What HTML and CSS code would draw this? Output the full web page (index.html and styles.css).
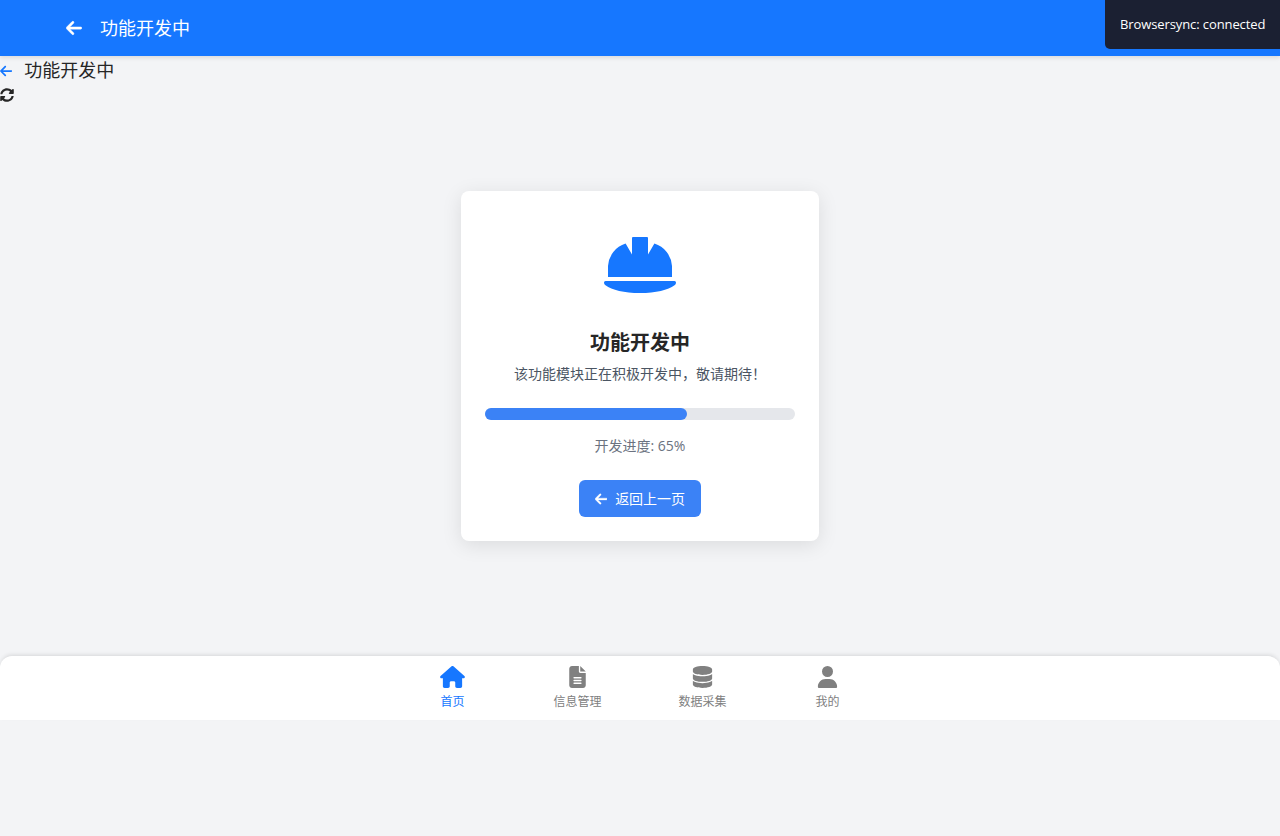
FILE: index.html
```html
<!DOCTYPE html>
<html lang="zh-CN">
<head>
<meta charset="utf-8">
<title>功能开发中</title>
<link rel="stylesheet" href="styles.css">
</head>
<body>
<svg class="sprite" xmlns="http://www.w3.org/2000/svg">
  <symbol id="arrow" viewBox="0 0 448 512"><path d="M9.4 233.4c-12.5 12.5-12.5 32.8 0 45.3l160 160c12.5 12.5 32.8 12.5 45.3 0s12.5-32.8 0-45.3L109.2 288 416 288c17.7 0 32-14.3 32-32s-14.3-32-32-32l-306.7 0L214.6 118.6c12.5-12.5 12.5-32.8 0-45.3s-32.8-12.5-45.3 0l-160 160z"/></symbol>
</svg>
<header class="header">
  <svg class="header-arrow bold-arrow"><use href="#arrow"/></svg>
  <h1 class="header-title">功能开发中</h1>
</header>
<div class="notify">Browsersync: connected</div>
<main class="main">
  <div class="subhead">
    <svg class="small-arrow"><use href="#arrow"/></svg>
    <span class="subhead-title">功能开发中</span>
  </div>
  <div class="refresh">
    <svg class="refresh-icon" viewBox="0 0 512 512"><path d="M370.72 133.28C339.458 104.008 298.888 87.962 255.848 88c-77.458.068-144.328 53.178-162.791 126.85-1.344 5.363-6.122 9.15-11.651 9.15H24.103c-7.498 0-13.194-6.807-11.807-14.176C33.933 94.924 134.813 8 256 8c66.448 0 126.791 26.136 171.315 68.685L463.03 40.97C478.149 25.851 504 36.559 504 57.941V192c0 13.255-10.745 24-24 24H345.941c-21.382 0-32.09-25.851-16.971-40.971l41.75-41.749zM32 296h134.059c21.382 0 32.09 25.851 16.971 40.971l-41.75 41.75c31.262 29.273 71.835 45.319 114.876 45.28 77.418-.07 144.315-53.144 162.787-126.849 1.344-5.363 6.122-9.15 11.651-9.15h57.304c7.498 0 13.194 6.807 11.807 14.176C478.067 417.076 377.187 504 256 504c-66.448 0-126.791-26.136-171.315-68.685L48.97 471.03C33.851 486.149 8 475.441 8 454.059V320c0-13.255 10.745-24 24-24z"/></svg>
  </div>
  <section class="stage">
    <div class="card">
      <svg class="helmet" viewBox="0 0 72 64"><path d="M29 4h14q1 0 1 1V21.500L50.400 10.600A25 25 0 0 1 68 33V44H4V33A25 25 0 0 1 21.600 10.600L28 21.500V5Q28 4 29 4z"/><path d="M1.500 48h69q1.500 0 1.500 1.500c0 1.200-.5 2-1.500 2.700C64 57 52 60 36 60S8 57 1.500 52.200C.5 51.500 0 50.700 0 49.500Q0 48 1.500 48z"/></svg>
      <h2 class="card-title">功能开发中</h2>
      <p class="card-text">该功能模块正在积极开发中，敬请期待！</p>
      <div class="track"><div class="fill" style="width:65%"></div></div>
      <p class="progress-text">开发进度: 65%</p>
      <button class="button"><svg class="button-arrow bold-arrow"><use href="#arrow"/></svg>返回上一页</button>
    </div>
  </section>
  <nav class="tabs">
    <a class="tab active"><svg class="tab-icon" viewBox="0 0 576 512"><path d="M575.8 255.5c0 18-15 32.1-32 32.1h-32l.7 160.2c0 2.700-.2 5.400-.5 8.100V472c0 22.100-17.900 40-40 40H456c-1.100 0-2.200 0-3.300-.1c-1.400 .1-2.800 .1-4.200 .1H416 392c-22.100 0-40-17.900-40-40V448 384c0-17.700-14.300-32-32-32H256c-17.700 0-32 14.300-32 32v64 24c0 22.100-17.900 40-40 40H160 128.100c-1.500 0-3-.1-4.500-.2c-1.200 .1-2.400 .2-3.600 .2H104c-22.100 0-40-17.900-40-40V360c0-.9 0-1.900 .1-2.800V287.600H32c-18 0-32-14-32-32.100c0-9 3-17 10-24L266.400 8c7-7 15-8 22-8s15 2 21 7L564.800 231.500c8 7 12 15 11 24z"/></svg>首页</a>
    <a class="tab"><svg class="tab-icon" viewBox="0 0 384 512"><path d="M64 0C28.700 0 0 28.700 0 64V448c0 35.300 28.700 64 64 64H320c35.300 0 64-28.700 64-64V160H256c-17.700 0-32-14.300-32-32V0H64zM256 0V128H384L256 0zM112 256H272c8.800 0 16 7.200 16 16s-7.200 16-16 16H112c-8.800 0-16-7.200-16-16s7.200-16 16-16zm0 64H272c8.800 0 16 7.200 16 16s-7.200 16-16 16H112c-8.800 0-16-7.200-16-16s7.200-16 16-16zm0 64H272c8.800 0 16 7.200 16 16s-7.200 16-16 16H112c-8.800 0-16-7.200-16-16s7.200-16 16-16z"/></svg>信息管理</a>
    <a class="tab"><svg class="tab-icon" viewBox="0 0 448 512"><path d="M448 80v48c0 44.200-100.300 80-224 80S0 172.200 0 128V80C0 35.800 100.300 0 224 0S448 35.800 448 80zM393.200 214.700c20.800-7.400 39.900-16.900 54.800-28.600V288c0 44.200-100.300 80-224 80S0 332.200 0 288V186.100c14.900 11.800 34 21.200 54.800 28.600C99.700 230.700 159.500 240 224 240s124.300-9.300 169.200-25.300zM0 346.100c14.900 11.800 34 21.200 54.800 28.600C99.700 390.700 159.500 400 224 400s124.300-9.300 169.200-25.300c20.800-7.400 39.900-16.900 54.800-28.600V432c0 44.200-100.300 80-224 80S0 476.200 0 432V346.100z"/></svg>数据采集</a>
    <a class="tab"><svg class="tab-icon" viewBox="0 0 448 512"><path d="M224 256A128 128 0 1 0 224 0a128 128 0 1 0 0 256zm-45.700 48C79.800 304 0 383.800 0 482.300C0 498.700 13.300 512 29.700 512H418.300c16.400 0 29.700-13.300 29.700-29.700C448 383.800 368.200 304 269.700 304H178.300z"/></svg>我的</a>
  </nav>
</main>
</body>
</html>
```
FILE: styles.css
```css
* { box-sizing: border-box; margin: 0; padding: 0; }
body {
  min-height: 836px;
  background: #f3f4f6;
  color: #262626;
  font: 14px/24px "Open Sans", "Noto Sans CJK SC", sans-serif;
}
svg { display: block; fill: currentColor; flex: none; }
.sprite { display: none; }
.bold-arrow { stroke: currentColor; stroke-width: 12px; }
.header {
  position: relative;
  display: flex;
  align-items: center;
  height: 56px;
  padding-left: 66px;
  background: #1677ff;
  color: #fff;
  box-shadow: 0 2px 4px rgba(0,0,0,.1);
}
.header-arrow { width: 16px; height: 18px; }
.header-title { margin-left: 18px; font-size: 18px; font-weight: 400; }
.notify {
  position: absolute;
  top: 0;
  right: 0;
  width: 175px;
  height: 49px;
  padding-left: 15px;
  border-bottom-left-radius: 5px;
  background: #1b2032;
  color: #fff;
  font-size: 13px;
  line-height: 48px;
  letter-spacing: -0.1px;
  white-space: nowrap;
}
.main { display: flex; flex-direction: column; height: 664px; }
.subhead { display: flex; align-items: center; height: 30px; }
.small-arrow { width: 12.25px; height: 14px; color: #1677ff; }
.subhead-title { margin-left: 12px; padding-bottom: 2px; font-size: 18px; }
.refresh { display: flex; align-items: center; height: 18px; }
.refresh-icon { width: 14px; height: 14px; }
.stage { flex: 1; display: flex; justify-content: center; padding-top: 87px; }
.card {
  display: flex;
  flex-direction: column;
  align-items: center;
  width: 358px;
  height: 350px;
  padding: 42px 24px 24px;
  border-radius: 8px;
  background: #fff;
  box-shadow: 0 4px 20px rgba(0,0,0,.1);
}
.helmet { width: 72px; height: 64px; color: #1677ff; }
.card-title { margin-top: 32px; font-size: 20px; line-height: 28px; font-weight: 700; }
.card-text { margin-top: 6px; line-height: 22px; color: #4b5563; white-space: nowrap; }
.track { width: 310px; height: 12px; margin-top: 23px; border-radius: 6px; background: #e5e7eb; }
.fill { height: 12px; border-radius: 6px; background: #3b82f6; }
.progress-text { margin-top: 14px; color: #6b7280; }
.button {
  display: flex;
  align-items: center;
  justify-content: center;
  gap: 8px;
  width: 122px;
  height: 37px;
  margin-top: 22px;
  border: 0;
  border-radius: 6px;
  background: #3b82f6;
  color: #fff;
  font: inherit;
}
.button-arrow { width: 12.25px; height: 14px; }
.tabs {
  display: flex;
  justify-content: center;
  height: 64px;
  border-radius: 12px 12px 0 0;
  background: #fff;
  box-shadow: 0 -2px 4px -1px rgba(0,0,0,.12);
}
.tab {
  display: flex;
  flex-direction: column;
  align-items: center;
  width: 125px;
  padding-top: 10px;
  color: #808080;
  font-size: 12px;
  line-height: 18px;
}
.tab-icon { width: 25px; height: 22px; margin-bottom: 5px; }
.active { color: #1677ff; }
```
